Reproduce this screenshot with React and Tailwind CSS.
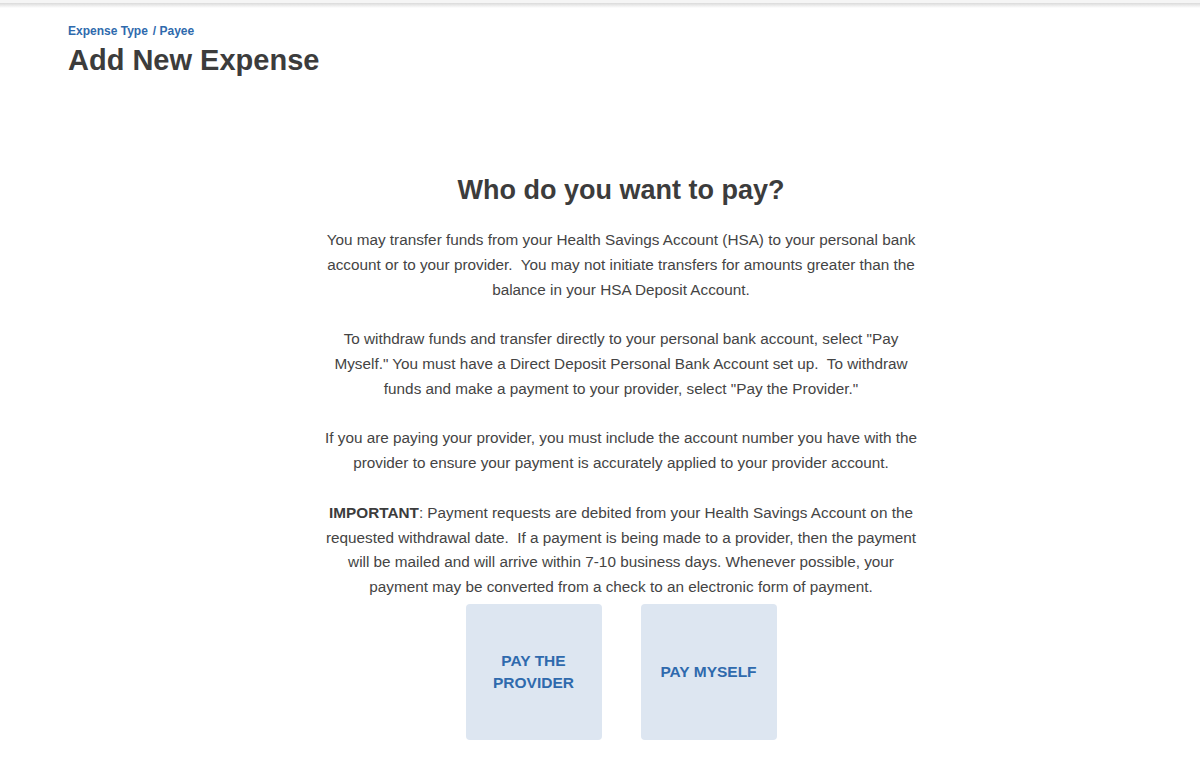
import React from 'react'

const FONT = { fontFamily: '"Liberation Sans", Arial, Helvetica, sans-serif' }

const ChoiceButton = ({ children }) => (
  <button className="w-[136px] h-[136px] rounded-[4px] bg-[#dde6f1] text-[#2f6aad] font-bold text-[15.5px] leading-[22px] uppercase flex items-center justify-center text-center px-4">
    {children}
  </button>
)

const App = () => {
  return (
    <div className="min-h-[765px] bg-white text-[#444]" style={FONT}>
      <div className="h-[3px] bg-[#f5f5f5]" />
      <div className="h-[5px] bg-gradient-to-b from-[#dadada] to-white" />
      <div className="pl-[68px] pr-[26px]">
        <div className="pt-[15px] text-[12px] font-bold text-[#2f6aad] leading-[16px]">
          <span>Expense Type</span>
          <span className="ml-[5px]">/ Payee</span>
        </div>
        <h1 className="mt-[3px] text-[29px] font-bold text-[#3c3c3c] leading-[36px]">Add New Expense</h1>

        <div className="flex flex-col items-center mt-[95px]">
          <h2 className="text-[27px] font-bold text-[#3c3c3c] leading-[34px]">Who do you want to pay?</h2>
          <div className="mt-[21px] w-[600px] text-center text-[15.3px] leading-[24.8px] text-[#444]">
            <p>
              You may transfer funds from your Health Savings Account (HSA) to your personal bank account or to your provider.&nbsp; You may not initiate transfers for amounts greater than the balance in your HSA Deposit Account.
            </p>
            <p className="mt-[24.8px]">
              To withdraw funds and transfer directly to your personal bank account, select "Pay Myself." You must have a Direct Deposit Personal Bank Account set up.&nbsp; To withdraw funds and make a payment to your provider, select "Pay the Provider."
            </p>
            <p className="mt-[24.8px]">
              If you are paying your provider, you must include the account number you have with the provider to ensure your payment is accurately applied to your provider account.
            </p>
            <p className="mt-[24.8px]">
              <strong className="font-bold text-[#3c3c3c]">IMPORTANT</strong>: Payment requests are debited from your Health Savings Account on the requested withdrawal date.&nbsp; If a payment is being made to a provider, then the payment will be mailed and will arrive within 7-10 business days. Whenever possible, your payment may be converted from a check to an electronic form of payment.
            </p>
          </div>
          <div className="flex gap-[39px] mt-[4px]">
            <ChoiceButton>Pay the Provider</ChoiceButton>
            <ChoiceButton>Pay Myself</ChoiceButton>
          </div>
        </div>
      </div>
    </div>
  )
}

export default App
